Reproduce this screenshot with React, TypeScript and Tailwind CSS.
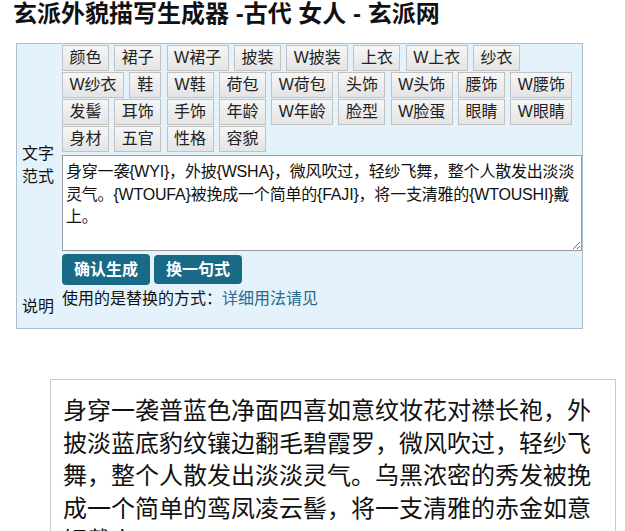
import { useState } from "react";

const tagRows: string[] = [
  "颜色", "裙子", "W裙子", "披装", "W披装", "上衣", "W上衣", "纱衣",
  "W纱衣", "鞋", "W鞋", "荷包", "W荷包", "头饰", "W头饰", "腰饰", "W腰饰",
  "发髻", "耳饰", "手饰", "年龄", "W年龄", "脸型", "W脸蛋", "眼睛", "W眼睛",
  "身材", "五官", "性格", "容貌",
];

const template =
  "身穿一袭{WYI}，外披{WSHA}，微风吹过，轻纱飞舞，整个人散发出淡淡\n灵气。{WTOUFA}被挽成一个简单的{FAJI}，将一支清雅的{WTOUSHI}戴\n上。";

const result =
  "身穿一袭普蓝色净面四喜如意纹妆花对襟长袍，外披淡蓝底豹纹镶边翻毛碧霞罗，微风吹过，轻纱飞舞，整个人散发出淡淡灵气。乌黑浓密的秀发被挽成一个简单的鸾凤凌云髻，将一支清雅的赤金如意钿戴上。";

// button widths follow the label: one glyph, two glyphs, or "W" + two glyphs
function widthFor(label: string) {
  if (label.length === 1) return "w-[32px]";
  if (label.length === 3) return "w-[62px]";
  return "w-[47px]";
}

function TagButton({ label }: { label: string }) {
  return (
    <button
      type="button"
      className={`${widthFor(label)} flex h-[26px] items-center justify-center whitespace-nowrap border border-[#c2c2c2] bg-gradient-to-b from-[#f6f6f6] to-[#e4e4e4] text-[16px] leading-[20px] text-[#222]`}
    >
      {label}
    </button>
  );
}

export default function App() {
  const [text, setText] = useState(template);

  return (
    <div className="min-h-[531px] bg-white font-['Liberation_Sans','Noto_Sans_CJK_SC',sans-serif] text-[#111]">
      <h1 className="pl-[13px] text-[24px] font-bold leading-[28px] text-[#111]">
        玄派外貌描写生成器 -古代 女人 - 玄派网
      </h1>

      <div className="ml-[16px] mt-[15px] w-[567px] border border-[#a9bfce] bg-[#e4f2fc]">
        <div className="flex">
          <div className="flex w-[45px] shrink-0 items-center pl-[5px] text-[16px] leading-[23px]">
            <span className="w-[33px]">文字范式</span>
          </div>
          <div className="flex-1 pt-[1px]">
            <div className="flex flex-wrap gap-x-[5.3px] gap-y-[1px] pr-[4px]">
              {tagRows.map((tag) => (
                <TagButton key={tag} label={tag} />
              ))}
            </div>
            <textarea
              value={text}
              onChange={(e) => setText(e.target.value)}
              className="mt-[3px] block h-[96px] w-[520px] border border-[#9a9a9a] bg-white px-[3px] pt-[5px] text-[16px] leading-[22.5px] tracking-[-0.2px] text-[#111] outline-none"
            />
            <div className="mt-[3px] flex gap-[4px]">
              <button
                type="button"
                className="h-[31px] rounded-[4px] bg-[#186a86] px-[12px] text-[16px] font-bold text-white"
              >
                确认生成
              </button>
              <button
                type="button"
                className="mt-[1px] h-[29px] rounded-[4px] bg-[#186a86] px-[12px] text-[16px] font-bold text-white"
              >
                换一句式
              </button>
            </div>
          </div>
        </div>
        <div className="flex">
          <div className="flex w-[45px] shrink-0 items-center pl-[5px] text-[16px] leading-[23px]">
            说明
          </div>
          <div className="flex-1 pb-[18px] pt-[3px] text-[16px] leading-[22px]">
            使用的是替换的方式：<a href="#" className="text-[#2a6a8c]">详细用法请见</a>
          </div>
        </div>
      </div>

      <div className="ml-[50px] mt-[50px] w-[566px] border border-[#c9c9c9] bg-white px-[12px] pb-[16px] pt-[15px] text-[24px] leading-[32.5px] text-[#111]">
        {result}
      </div>
    </div>
  );
}
